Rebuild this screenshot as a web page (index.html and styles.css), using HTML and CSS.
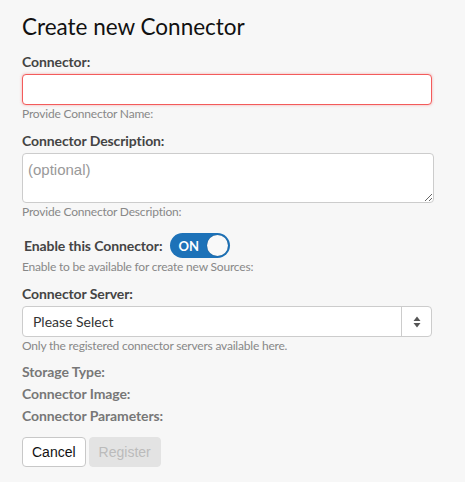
FILE: index.html
```html
<!DOCTYPE html>
<html lang="en">
<head>
	<meta charset="utf-8">
	<title>Create new Connector</title>
	<link rel="stylesheet" href="styles.css">
</head>
<body>
	<div class="page">
		<h1 class="title">Create new Connector</h1>

		<div class="field">
			<label class="label" for="name">Connector:</label>
			<input class="control invalid" id="name" type="text">
			<div class="help">Provide Connector Name:</div>
		</div>

		<div class="field">
			<label class="label" for="desc">Connector Description:</label>
			<textarea class="control area" id="desc" placeholder="(optional)"></textarea>
			<div class="help">Provide Connector Description:</div>
		</div>

		<div class="field">
			<div class="switch-row">
				<span class="label inline">Enable this Connector:</span>
				<span class="switch on">
					<span class="switch-text">ON</span>
					<span class="knob"></span>
				</span>
			</div>
			<div class="help">Enable to be available for create new Sources:</div>
		</div>

		<div class="field">
			<label class="label" for="server">Connector Server:</label>
			<div class="select">
				<span class="select-value">Please Select</span>
				<span class="select-arrows">
					<svg width="8" height="12" viewBox="0 0 8 12">
						<path d="M4 0.5 L7.5 5 L0.5 5 Z M4 11.5 L7.5 7 L0.5 7 Z" fill="#555"/>
					</svg>
				</span>
			</div>
			<div class="help">Only the registered connector servers available here.</div>
		</div>

		<div class="details">
			<div class="detail">Storage Type:</div>
			<div class="detail">Connector Image:</div>
			<div class="detail">Connector Parameters:</div>
		</div>

		<div class="actions">
			<button class="btn" type="button">Cancel</button>
			<button class="btn" type="button" disabled>Register</button>
		</div>
	</div>
</body>
</html>
```

FILE: styles.css
```css
html, body { margin: 0; padding: 0; background: #f7f7f7; color: #111; font-family: Lato, "Open Sans", sans-serif; }
.page { padding: 11px 22px 0 22px; width: 412px; }
.title { margin: 0; font-size: 22.5px; line-height: 32px; font-weight: normal; color: #111; }

.field { margin-top: 9px; }
.label { display: block; font-size: 14px; line-height: 20px; font-weight: bold; color: #444; margin-bottom: 2px; letter-spacing: -0.1px; }
.label.inline { display: inline-block; margin: 0 8px 0 2px; }
.help { font-size: 12px; line-height: 16px; color: #888; margin-top: 1px; letter-spacing: -0.2px; }

.control { box-sizing: border-box; display: block; width: 410px; height: 31px; margin: 0; padding: 4px 10px; background: white; border: 1px solid #ccc; border-radius: 4px; font-family: "Liberation Sans", Arial, sans-serif; font-size: 15px; color: #333; outline: none; }
.control.invalid { border-color: #f35b5b; box-shadow: 0 0 3px rgba(240, 80, 80, 0.45); }
.control.area { width: 412px; height: 50px; padding: 7px 5px; resize: vertical; }
.control.area::placeholder { color: #999; }

.switch-row { display: flex; align-items: center; margin-top: 13px; }
.switch { position: relative; display: inline-flex; align-items: center; box-sizing: border-box; width: 60px; height: 25px; border-radius: 13px; background: #1d72b8; }
.switch-text { color: white; font-size: 13px; font-weight: bold; padding-left: 8px; }
.knob { position: absolute; right: 2px; top: 2px; width: 21px; height: 21px; border-radius: 50%; background: #f9f9f9; box-shadow: 0 0 1px rgba(0, 0, 0, 0.4); }

.select { box-sizing: border-box; display: flex; width: 410px; height: 31px; background: white; border: 1px solid #ccc; border-radius: 4px; }
.select-value { flex: 1; padding-left: 10px; font-size: 14px; line-height: 29px; color: #333; }
.select-arrows { display: flex; align-items: center; justify-content: center; width: 29px; border-left: 1px solid #ccc; }
.select-arrows svg { display: block; }

.details { margin-top: 7px; }
.detail { font-size: 14px; line-height: 22px; font-weight: bold; color: #777; letter-spacing: -0.1px; }

.actions { display: flex; gap: 3px; margin-top: 10px; }
.btn { height: 30px; padding: 0 9px; border: 1px solid #c8c8c8; border-radius: 4px; background: white; font-family: "Liberation Sans", Arial, sans-serif; font-size: 14px; color: #111; }
.btn:disabled { background: #e3e3e3; border-color: #e3e3e3; color: #bbb; }
```
